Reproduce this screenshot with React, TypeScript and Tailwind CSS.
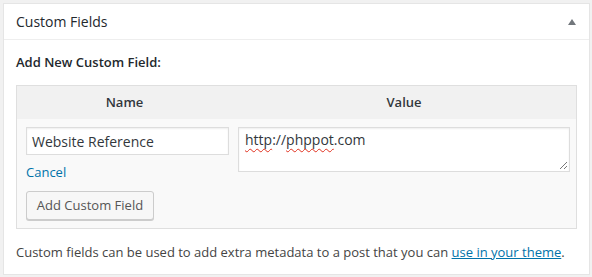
import React from "react";

export default function App() {
  return (
    <div
      className="w-[592px] h-[277px] bg-[#f1f1f1] pt-[3px] pl-[3px]"
      style={{ fontFamily: '"Open Sans", "Liberation Sans", sans-serif' }}
    >
      <div className="w-[587px] h-[272px] bg-white border border-[#e5e5e5] flex flex-col">
        <div className="h-[36px] border-b border-[#eeeeee] flex items-center justify-between pl-[12px] pr-[13px]">
          <span className="text-[14px] text-[#23282d] leading-none">Custom Fields</span>
          <svg width="8" height="6" viewBox="0 0 8 6" className="mt-[1px]">
            <polygon points="4,0 8,6 0,6" fill="#72777c" />
          </svg>
        </div>
        <div className="pl-[12px] pr-[12px]">
          <div className="h-[45px] flex items-center pt-[1px] text-[13px] font-semibold text-[#23282d]">
            Add New Custom Field:
          </div>
          <div className="w-[561px] h-[144px] border border-[#dfdfdf] bg-[#f9f9f9] flex flex-col">
            <div className="h-[33px] bg-[#f1f1f1] flex text-[13px] font-semibold text-[#32373c]">
              <div className="w-[215px] flex items-center justify-center">Name</div>
              <div className="flex-1 flex items-center justify-center">Value</div>
            </div>
            <div className="flex pt-[8px]">
              <div className="w-[221px] pl-[9px] flex flex-col">
                <div className="w-[203px] h-[28px] bg-white border border-[#dddddd] shadow-[inset_0_1px_2px_rgba(0,0,0,0.07)] flex items-center pl-[5px] text-[14px] text-[#32373c]">
                  Website Reference
                </div>
                <div className="mt-[8px] text-[13px] text-[#0073aa] leading-[18px]">Cancel</div>
                <div className="mt-[10px] w-[128px] h-[29px] bg-[#f7f7f7] border border-[#cccccc] rounded-[3px] shadow-[0_1px_0_#cccccc] flex items-center justify-center text-[13px] text-[#555555]">
                  Add Custom Field
                </div>
              </div>
              <div className="relative w-[332px] h-[45px] bg-white border border-[#dddddd] shadow-[inset_0_1px_2px_rgba(0,0,0,0.07)] pl-[6px] pt-[2px] text-[14px] text-[#32373c] leading-[20px]">
                <span className="underline decoration-wavy decoration-[#e0301e] decoration-1 underline-offset-[3px]">http</span>
                ://
                <span className="underline decoration-wavy decoration-[#e0301e] decoration-1 underline-offset-[3px]">phppot</span>
                .com
                <svg width="9" height="9" viewBox="0 0 9 9" className="absolute right-[1px] bottom-[1px]">
                  <line x1="8" y1="1" x2="1" y2="8" stroke="#777" strokeWidth="1" />
                  <line x1="8" y1="5" x2="5" y2="8" stroke="#777" strokeWidth="1" />
                </svg>
              </div>
            </div>
          </div>
          <div className="mt-[14px] text-[13px] text-[#444444] leading-[18px]">
            Custom fields can be used to add extra metadata to a post that you can{" "}
            <span className="text-[#0073aa] underline">use in your theme</span>.
          </div>
        </div>
      </div>
    </div>
  );
}
